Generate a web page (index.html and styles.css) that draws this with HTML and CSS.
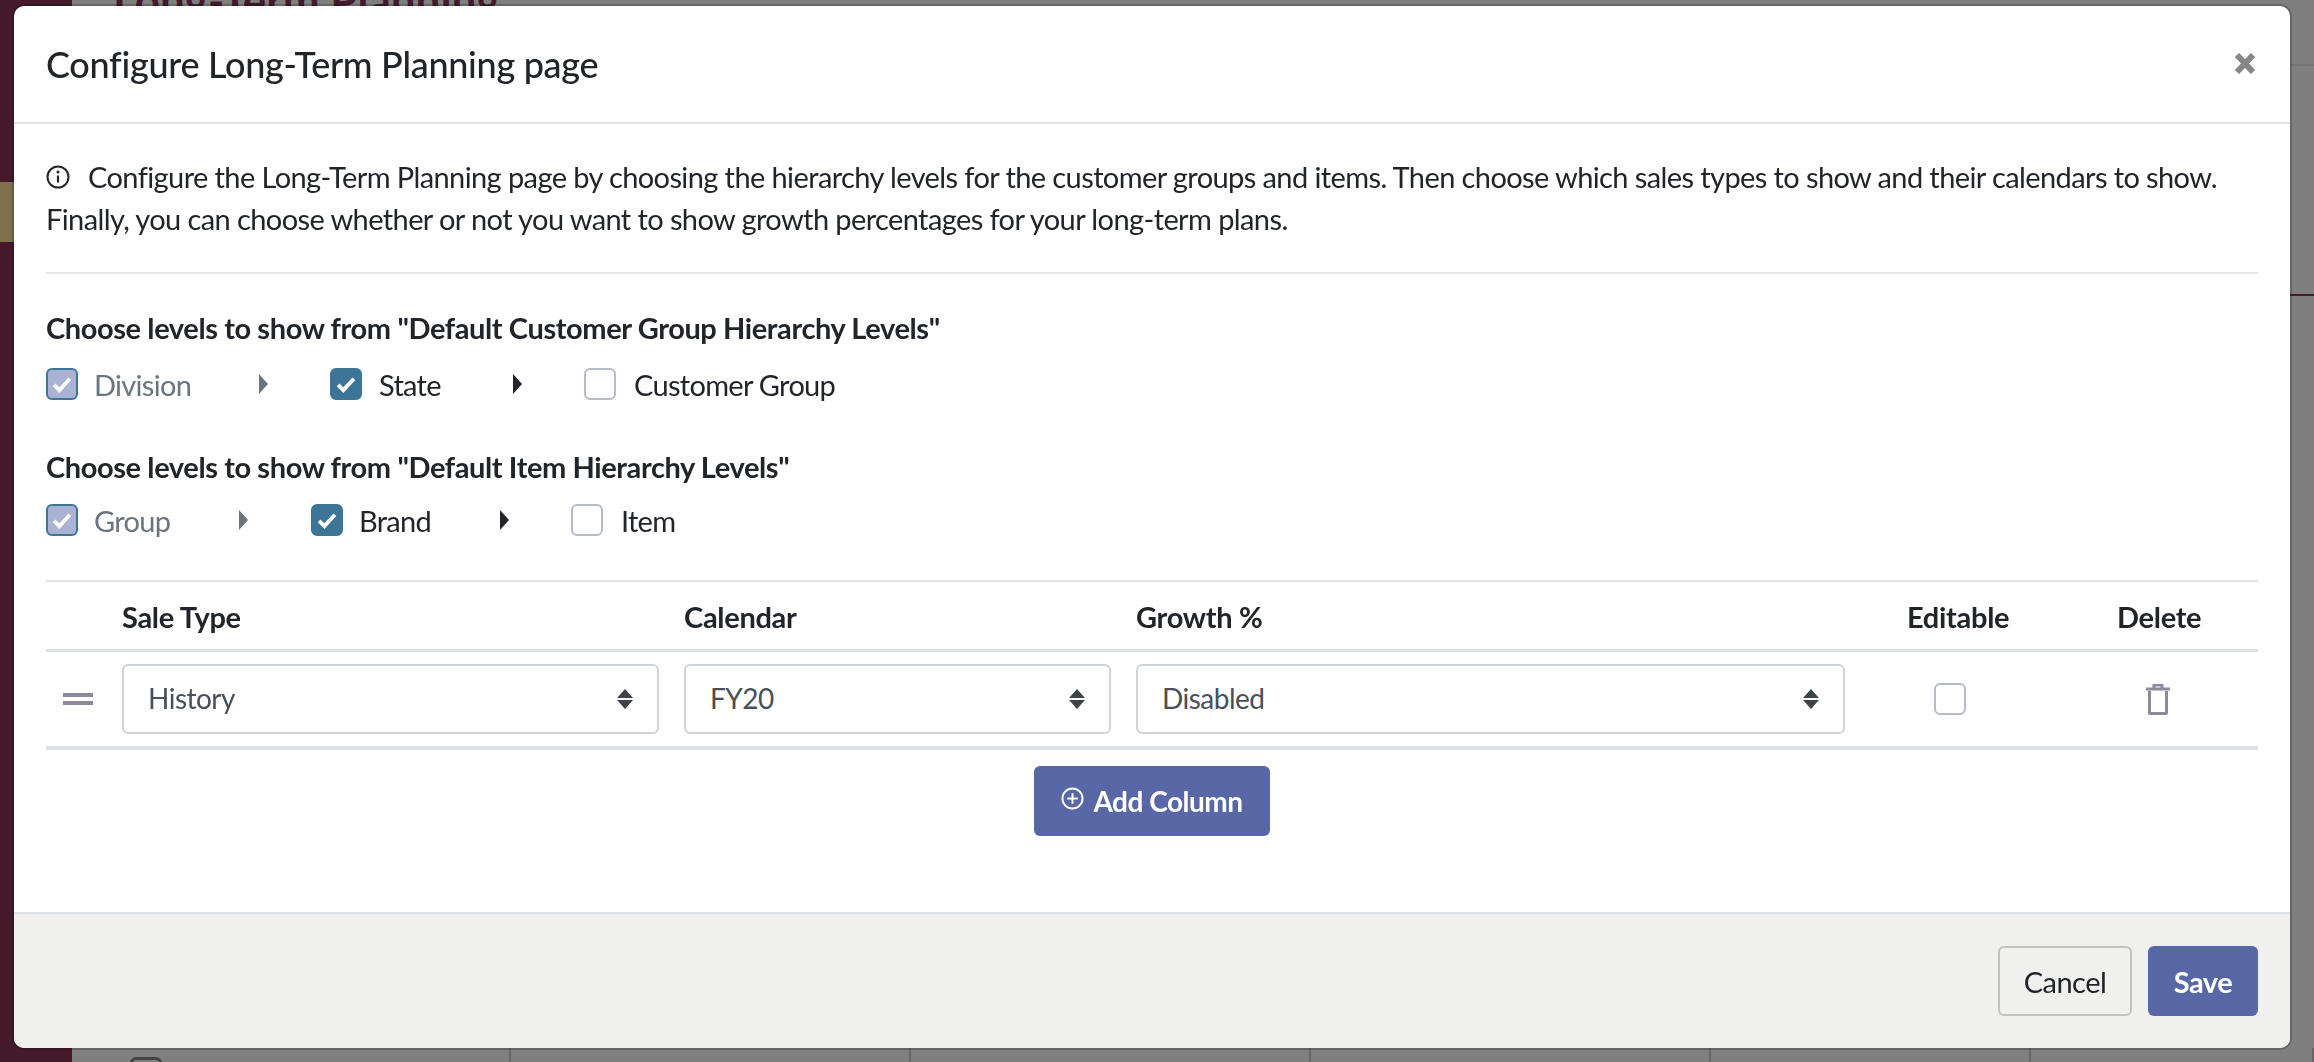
FILE: index.html
```html
<!DOCTYPE html>
<html lang="en">
<head>
<meta charset="utf-8">
<title>Configure Long-Term Planning page</title>
<link rel="stylesheet" href="styles.css">
</head>
<body>
<div class="app">
  <aside class="sidebar"><div class="side-tab"></div></aside>
  <main class="page">
    <div class="page-title">Long-Term Planning</div>
    <div class="page-line second"></div>
    <div class="page-line accent"></div>
    <div class="page-grid">
      <div class="page-cell"><span class="page-check"></span></div>
      <div class="page-cell"></div>
      <div class="page-cell"></div>
      <div class="page-cell"></div>
      <div class="page-cell"></div>
      <div class="page-cell"></div>
    </div>
  </main>
</div>
<div class="overlay"></div>
<section class="modal">
  <header class="modal-head">
    <h1 class="modal-title">Configure Long-Term Planning page</h1>
    <svg class="close" viewBox="0 0 22 23"><path d="M3 3l16 17M19 3L3 20" stroke="#868686" stroke-width="6" fill="none"/></svg>
  </header>
  <div class="modal-body">
    <p class="intro"><svg class="info" viewBox="0 0 24 24"><circle cx="12" cy="12" r="10.500" fill="none" stroke="#212529" stroke-width="2"/><path d="M12 10.500v7" stroke="#212529" stroke-width="2.200"/><circle cx="12" cy="7" r="1.500" fill="#212529"/></svg>Configure the Long-Term Planning page by choosing the hierarchy levels for the customer groups and items. Then choose which sales types to show and their calendars to show. Finally, you can choose whether or not you want to show growth percentages for your long-term plans.</p>
    <hr class="rule">
    <h2 class="group-title">Choose levels to show from "Default Customer Group Hierarchy Levels"</h2>
    <div class="levels">
      <span class="cb disabled"><svg viewBox="0 0 16 16"><path d="M3.500 8.500l3 3 6-6.500" fill="none" stroke="#fff" stroke-width="2.200"/></svg></span>
      <span class="lv-text muted lv-division">Division</span>
      <svg class="caret muted-caret" viewBox="0 0 9 20"><path d="M0 0l9 10-9 10z"/></svg>
      <span class="cb on lv-state-cb"><svg viewBox="0 0 16 16"><path d="M3.500 8.500l3 3 6-6.500" fill="none" stroke="#fff" stroke-width="2.200"/></svg></span>
      <span class="lv-text lv-state">State</span>
      <svg class="caret" viewBox="0 0 9 20"><path d="M0 0l9 10-9 10z"/></svg>
      <span class="cb lv-customer-cb"></span>
      <span class="lv-text lv-last">Customer Group</span>
    </div>
    <h2 class="group-title second-title">Choose levels to show from "Default Item Hierarchy Levels"</h2>
    <div class="levels second-levels">
      <span class="cb disabled"><svg viewBox="0 0 16 16"><path d="M3.500 8.500l3 3 6-6.500" fill="none" stroke="#fff" stroke-width="2.200"/></svg></span>
      <span class="lv-text muted lv-group">Group</span>
      <svg class="caret muted-caret" viewBox="0 0 9 20"><path d="M0 0l9 10-9 10z"/></svg>
      <span class="cb on lv-brand-cb"><svg viewBox="0 0 16 16"><path d="M3.500 8.500l3 3 6-6.500" fill="none" stroke="#fff" stroke-width="2.200"/></svg></span>
      <span class="lv-text lv-brand">Brand</span>
      <svg class="caret" viewBox="0 0 9 20"><path d="M0 0l9 10-9 10z"/></svg>
      <span class="cb lv-item-cb"></span>
      <span class="lv-text lv-last">Item</span>
    </div>
    <div class="table">
      <div class="row head-row">
        <span></span>
        <span>Sale Type</span>
        <span>Calendar</span>
        <span>Growth %</span>
        <span class="th-edit">Editable</span>
        <span class="th-delete">Delete</span>
      </div>
      <div class="row body-row">
        <span class="handle"></span>
        <div class="select"><span>History</span><svg viewBox="0 0 16 20"><path d="M8 0l8 9H0zM0 11h16l-8 9z"/></svg></div>
        <div class="select"><span>FY20</span><svg viewBox="0 0 16 20"><path d="M8 0l8 9H0zM0 11h16l-8 9z"/></svg></div>
        <div class="select"><span>Disabled</span><svg viewBox="0 0 16 20"><path d="M8 0l8 9H0zM0 11h16l-8 9z"/></svg></div>
        <div class="td-edit"><span class="cb"></span></div>
        <div class="td-delete"><svg class="trash" viewBox="0 0 24 31"><path d="M0 5h24M8 3.500V1h8v2.500" fill="none" stroke="#8a8a9a" stroke-width="3"/><path d="M3.500 7v21.500a1 1 0 0 0 1 1h15a1 1 0 0 0 1-1V7" fill="none" stroke="#8a8a9a" stroke-width="3"/></svg></div>
      </div>
    </div>
    <div class="add-wrap">
      <button class="btn primary add"><svg class="plus" viewBox="0 0 24 24"><circle cx="12" cy="12" r="10.500" fill="none" stroke="#fff" stroke-width="2"/><path d="M12 6.500v11M6.500 12h11" stroke="#fff" stroke-width="2"/></svg>Add Column</button>
    </div>
  </div>
  <footer class="modal-foot">
    <button class="btn ghost">Cancel</button>
    <button class="btn primary save">Save</button>
  </footer>
</section>
</body>
</html>
```

FILE: styles.css
```css
* { box-sizing: border-box; }
html, body { margin: 0; height: 100%; overflow: hidden; }
body { font-family: "Lato", "Noto Sans", sans-serif; color: #212529; background: #fff; }

/* page behind the dialog */
.app { display: flex; height: 1062px; }
.sidebar { width: 72px; background: #8a3658; padding-top: 182px; flex: none; }
.side-tab { width: 100%; height: 60px; background: #ffe0a0; }
.page { flex: 1; position: relative; background: #fff; }
.page-title { position: absolute; left: 41px; top: -26px; font-size: 44px; font-weight: 700; color: #8a3658; white-space: nowrap; }
.page-line { position: absolute; left: 0; right: 0; height: 2px; background: #e6e6e6; }
.page-line.second { top: 64px; }
.page-line.accent { top: 294px; background: #8a3658; }
.page-grid { position: absolute; left: 0; right: 0; top: 1048px; display: grid; grid-template-columns: 439px 400px 400px 400px 320px 1fr; height: 14px; }
.page-cell { border-right: 2px solid #ccc; padding-left: 58px; }
.page-check { display: block; width: 32px; height: 32px; margin-top: 9px; border: 3px solid #888; border-radius: 6px; background: #fff; }
.overlay { position: fixed; inset: 0; background: rgba(0, 0, 0, .5); }

/* dialog */
.modal { position: fixed; left: 14px; top: 6px; width: 2276px; height: 1042px; background: #fff; border-radius: 10px; box-shadow: 0 0 0 2px rgba(0, 0, 0, .2); display: flex; flex-direction: column; overflow: hidden; }
.modal-head { height: 118px; flex: none; padding: 0 34px 0 32px; display: flex; align-items: center; justify-content: space-between; border-bottom: 2px solid #dee2e6; }
.modal-title { margin: 0; font-size: 36px; font-weight: 500; letter-spacing: -.3px; line-height: 48px; }
.close { width: 22px; height: 23px; margin-bottom: 2px; }
.modal-body { flex: 1; padding: 32px 32px 0; display: flex; flex-direction: column; }
.intro { margin: 0; font-size: 29px; letter-spacing: -.6px; line-height: 42px; }
.info { width: 24px; height: 24px; margin-right: 18px; vertical-align: -1px; }
.rule { margin: 32px 0 0; border: 0; border-top: 2px solid #e4e6e8; }
.group-title { margin: 33px 0 0; font-size: 29px; font-weight: 700; letter-spacing: -.4px; line-height: 42px; }
.second-title { margin-top: 46px; }
.levels { display: flex; align-items: center; height: 32px; margin-top: 19px; font-size: 29px; letter-spacing: -.7px; }
.second-levels { margin-top: 16px; }
.cb { display: block; flex: none; width: 32px; height: 32px; border: 2px solid #b5bcc8; border-radius: 6px; background: #fff; }
.cb svg { display: block; width: 100%; height: 100%; }
.cb.on { background: #3d7599; border-color: #3d7599; }
.cb.disabled { background: #aab3d3; border-color: #3d7599; }
.lv-text { margin-left: 16px; white-space: nowrap; }
.lv-last { margin-left: 18px; }
.muted { color: #6c757d; }
.caret { width: 9px; height: 20px; flex: none; fill: #212529; }
.muted-caret { fill: #6c757d; }
.lv-division { width: 165px; }
.lv-state-cb { margin-left: 62px; }
.lv-state { width: 134px; margin-left: 17px; }
.lv-customer-cb { margin-left: 62px; }
.lv-group { width: 145px; }
.lv-brand-cb { margin-left: 63px; }
.lv-brand { width: 141px; }
.lv-item-cb { margin-left: 62px; }

.table { margin-top: 44px; border-top: 2px solid #dee2e6; }
.row { display: grid; grid-template-columns: 76px 537px 452px 734px 212px 1fr; align-items: center; }
.row > :nth-child(3) { margin-left: 25px; }
.row > :nth-child(4) { margin-left: 25px; }
.head-row { height: 70px; font-size: 29px; font-weight: 700; letter-spacing: -.3px; border-bottom: 3px solid #dee2e6; padding-top: 2px; }
.th-edit { margin-left: 62px; }
.th-delete { margin-left: 60px; }
.body-row { height: 98px; border-bottom: 4px solid #dee2e6; }
.handle { display: block; width: 30px; height: 12px; margin-left: 17px; border-top: 4px solid #8a8a9e; border-bottom: 4px solid #8a8a9e; }
.select { height: 70px; border: 2px solid #ced4da; border-radius: 6px; padding: 0 24px; display: flex; align-items: center; justify-content: space-between; font-size: 28px; letter-spacing: -.5px; color: #495057; background: #fff; }
.select svg { width: 16px; height: 20px; fill: #3e4349; flex: none; }
.select span { padding-bottom: 2px; }
.td-edit { padding-left: 89px; }
.td-delete { padding-left: 89px; }
.trash { display: block; width: 24px; height: 31px; }

.add-wrap { display: flex; justify-content: center; margin-top: 16px; }
.btn { font-family: inherit; font-size: 29px; letter-spacing: -.5px; height: 70px; border-radius: 6px; border: 2px solid transparent; display: inline-flex; align-items: center; justify-content: center; padding: 0; }
.primary { background: #5867a5; color: #fff; }
.add { width: 236px; font-size: 28px; font-weight: 700; }
.plus { width: 23px; height: 23px; margin-right: 9px; margin-bottom: 5px; }
.modal-foot { height: 136px; flex: none; background: #f0f0ee; border-top: 2px solid #dee2e6; display: flex; justify-content: flex-end; align-items: flex-start; gap: 16px; padding: 32px 32px 0 0; }
.ghost { width: 134px; background: transparent; border-color: #c2c2c2; color: #212529; }
.save { width: 110px; font-weight: 700; }
```
